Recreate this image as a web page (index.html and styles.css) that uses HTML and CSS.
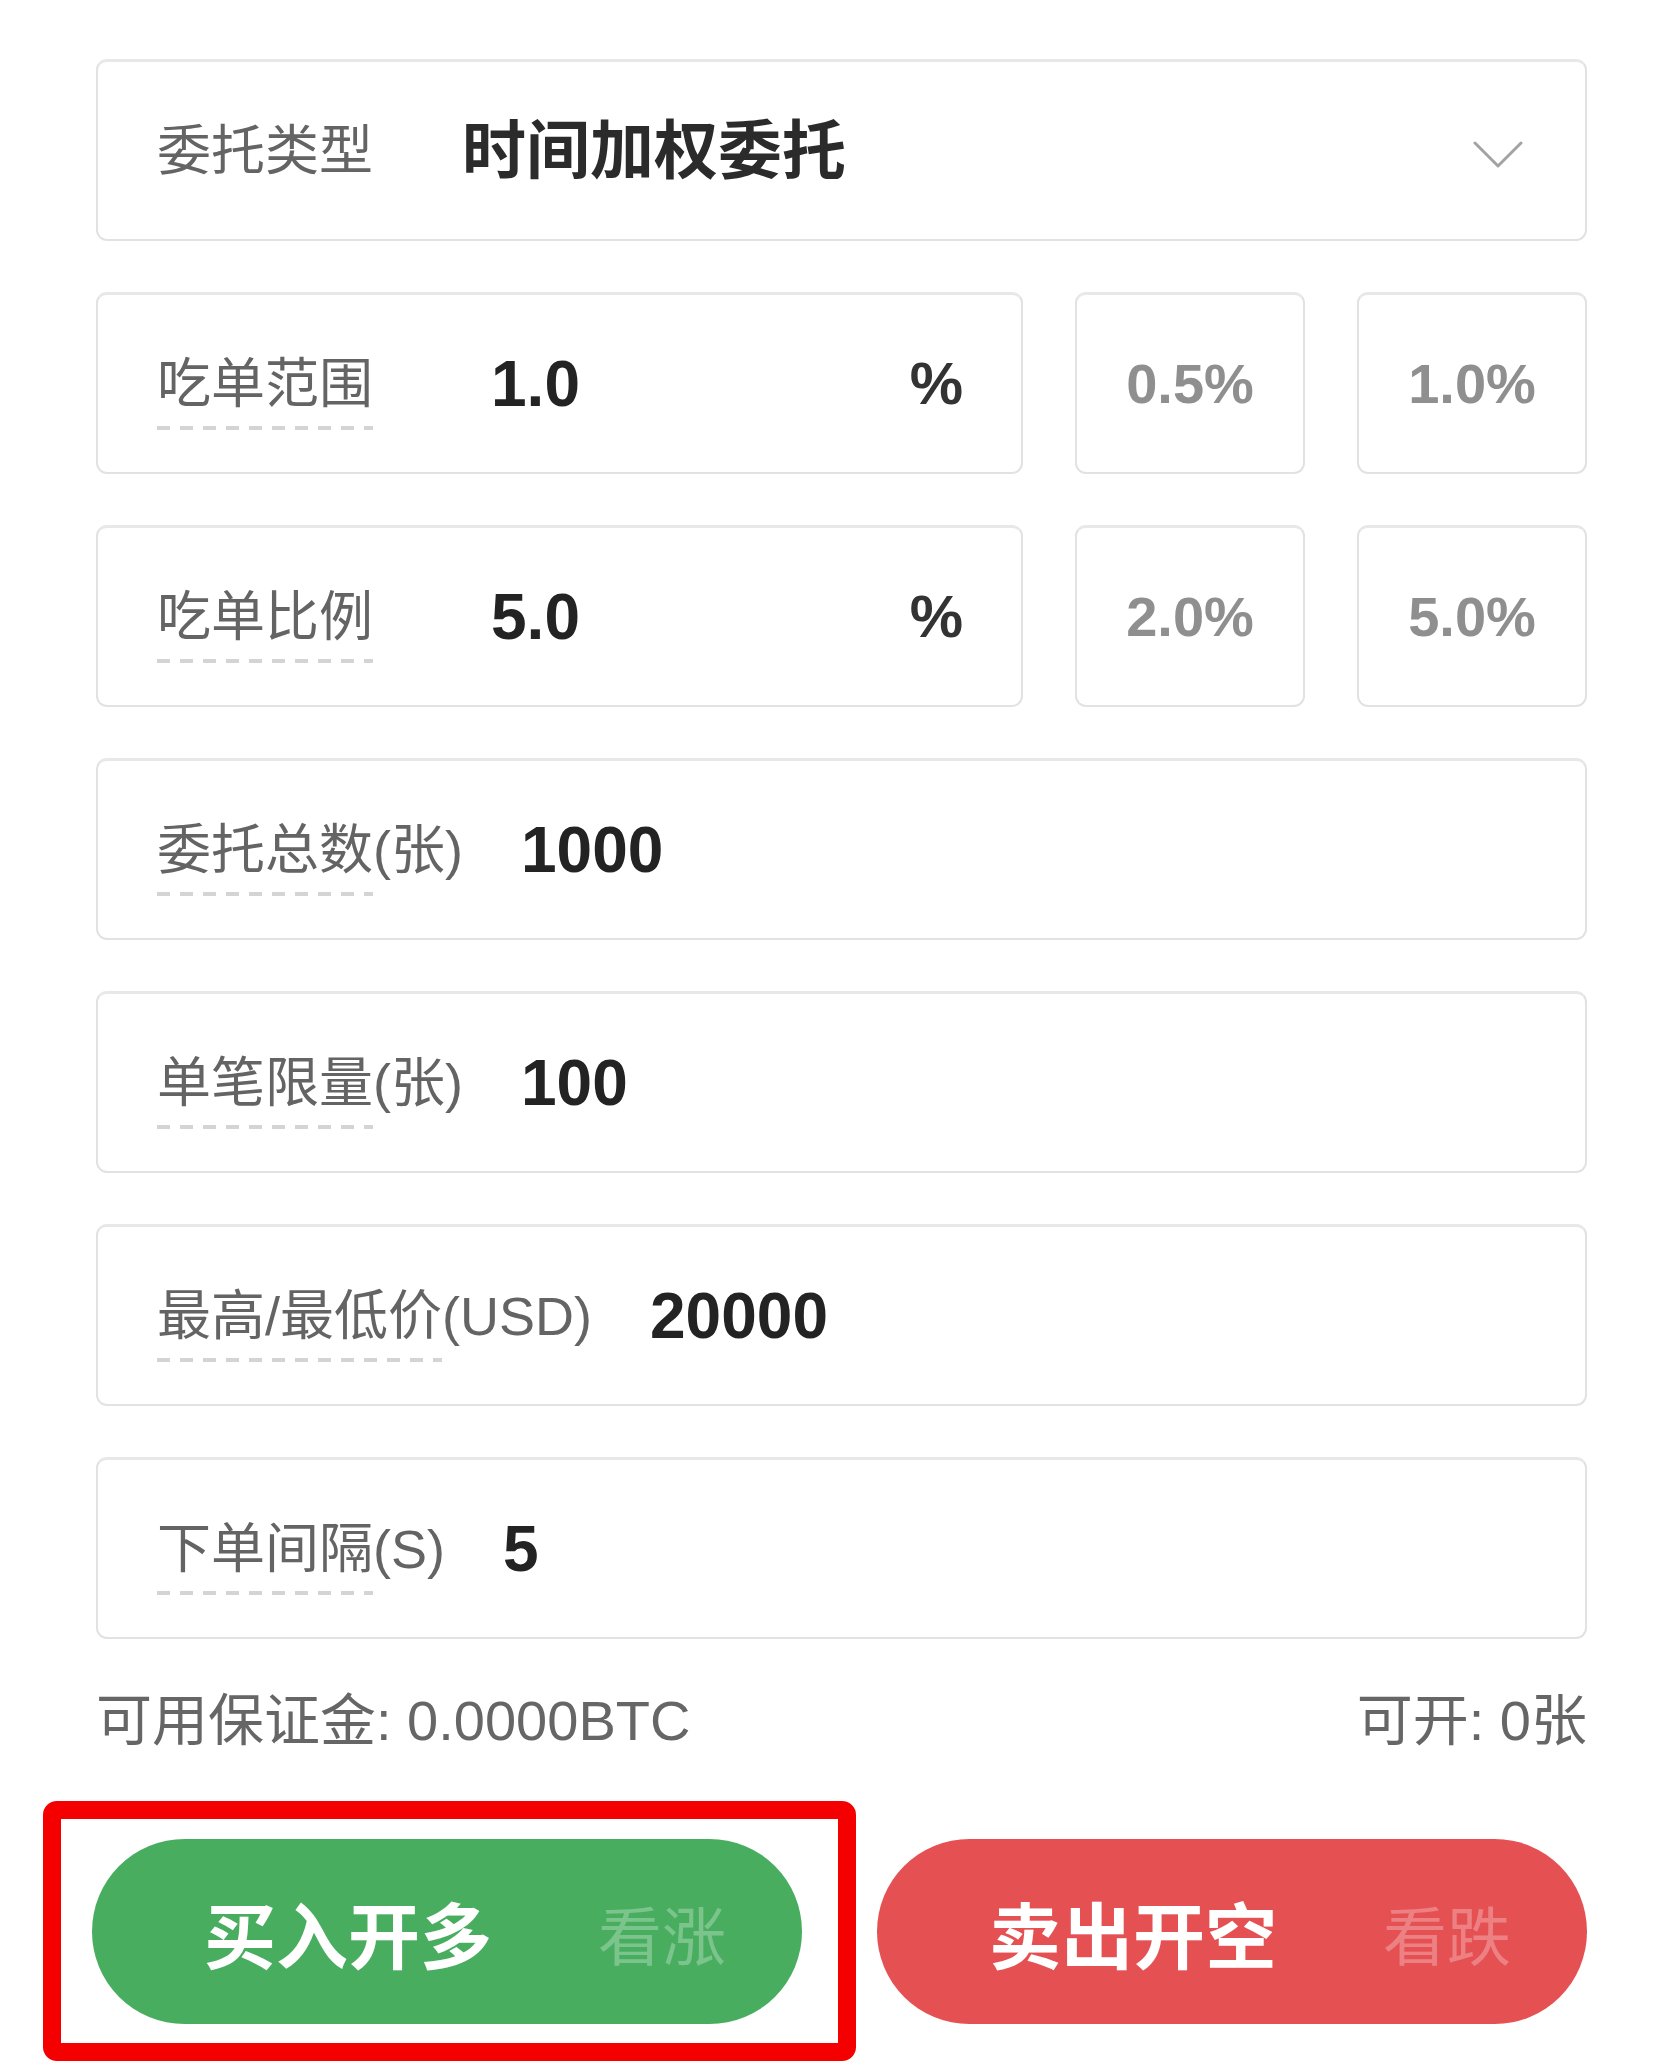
FILE: index.html
```html
<!DOCTYPE html>
<html lang="zh-CN">
<head>
<meta charset="utf-8">
<title>时间加权委托</title>
<link rel="stylesheet" href="styles.css">
</head>
<body>
<div class="page">
  <div class="form">
    <div class="field select">
      <span class="label label-select">委托类型</span>
      <span class="value value-select">时间加权委托</span>
      <svg class="chevron" width="50" height="28" viewBox="0 0 50 28" aria-hidden="true">
        <polyline points="2,2 25,25 48,2" fill="none" stroke="#a3a3a3" stroke-width="3" stroke-linecap="round" stroke-linejoin="round"/>
      </svg>
    </div>

    <div class="row">
      <div class="field input">
        <span class="label label-fixed"><span class="tip">吃单范围</span></span>
        <span class="value grow">1.0</span>
        <span class="unit">%</span>
      </div>
      <div class="field chip">0.5%</div>
      <div class="field chip">1.0%</div>
    </div>

    <div class="row">
      <div class="field input">
        <span class="label label-fixed"><span class="tip">吃单比例</span></span>
        <span class="value grow">5.0</span>
        <span class="unit">%</span>
      </div>
      <div class="field chip">2.0%</div>
      <div class="field chip">5.0%</div>
    </div>

    <div class="field">
      <span class="label"><span class="tip">委托总数</span>(张)</span>
      <span class="value">1000</span>
    </div>

    <div class="field">
      <span class="label"><span class="tip">单笔限量</span>(张)</span>
      <span class="value">100</span>
    </div>

    <div class="field">
      <span class="label"><span class="tip">最高/最低价</span>(USD)</span>
      <span class="value">20000</span>
    </div>

    <div class="field">
      <span class="label"><span class="tip">下单间隔</span>(S)</span>
      <span class="value">5</span>
    </div>
  </div>

  <div class="info">
    <span>可用保证金: 0.0000BTC</span>
    <span>可开: 0张</span>
  </div>

  <div class="actions">
    <div class="buy-wrap">
      <button class="btn buy"><span class="btn-main">买入开多</span><span class="btn-sub">看涨</span></button>
      <div class="annotate"></div>
    </div>
    <button class="btn sell"><span class="btn-main">卖出开空</span><span class="btn-sub">看跌</span></button>
  </div>
</div>
</body>
</html>
```

FILE: styles.css
```css
html, body {
  margin: 0;
  padding: 0;
  background: #ffffff;
}

body {
  font-family: "Liberation Sans", "Noto Sans CJK SC", sans-serif;
  color: #222;
}

.page {
  width: 1660px;
  height: 2072px;
  box-sizing: border-box;
  padding: 59px 73px 0 96px;
  overflow: hidden;
}

.form {
  display: flex;
  flex-direction: column;
  gap: 51px;
}

.row {
  display: flex;
  gap: 52px;
}

.field {
  display: flex;
  align-items: center;
  height: 182px;
  box-sizing: border-box;
  border: 2px solid #e2e2e2;
  border-top: 3px solid #e8e8e8;
  border-radius: 11px;
  padding: 0 58px 0 59px;
  background: #fff;
}

.input {
  flex: 1;
}

.chip {
  width: 230px;
  flex: none;
  justify-content: center;
  padding: 0;
  font-size: 56px;
  font-weight: 700;
  color: #8f8f8f;
  line-height: 1;
}

.label {
  font-size: 54px;
  line-height: 1;
  color: #646464;
  white-space: nowrap;
  margin-right: 58px;
}

.label-select {
  margin-right: 89px;
}

.label-fixed {
  width: 216px;
  margin-right: 118px;
}

.tip {
  padding-bottom: 16px;
  background-image: repeating-linear-gradient(90deg, #d4d4d4 0 13px, transparent 13px 23px);
  background-size: 100% 4px;
  background-position: left bottom;
  background-repeat: no-repeat;
}

.value {
  font-size: 64px;
  font-weight: 700;
  line-height: 1;
  color: #232323;
  white-space: nowrap;
}

.value-select {
  flex: 1;
  color: #2b2b2b;
}

.grow {
  flex: 1;
}

.unit {
  font-size: 60px;
  font-weight: 700;
  line-height: 1;
  color: #333;
}

.chevron {
  flex: none;
  margin-right: 4px;
  margin-top: 8px;
}

.info {
  display: flex;
  justify-content: space-between;
  margin-top: 42px;
  font-size: 56px;
  line-height: 80px;
  color: #666;
  white-space: nowrap;
}

.actions {
  display: grid;
  grid-template-columns: 1fr 1fr;
  column-gap: 75px;
  margin-top: 78px;
  margin-left: -4px;
}

.buy-wrap {
  position: relative;
  display: flex;
  min-width: 0;
}

.btn {
  width: 100%;
  height: 185px;
  box-sizing: border-box;
  border: none;
  border-radius: 93px;
  display: flex;
  align-items: center;
  justify-content: center;
  padding: 0 0 0 36px;
  margin: 0;
  font-family: "Noto Sans CJK SC", sans-serif;
  color: #fff;
  cursor: pointer;
}

.buy {
  background: #49ad60;
}

.sell {
  background: #e55053;
}

.btn-main {
  font-size: 72px;
  font-weight: 700;
  line-height: 1;
}

.btn-sub {
  font-size: 64px;
  font-weight: 400;
  line-height: 1;
  margin-left: 106px;
  color: rgba(255, 255, 255, 0.28);
}

.annotate {
  position: absolute;
  left: -49px;
  top: -38px;
  width: 813px;
  height: 260px;
  box-sizing: border-box;
  border: 18px solid #f40000;
  border-radius: 14px;
  pointer-events: none;
}
```
